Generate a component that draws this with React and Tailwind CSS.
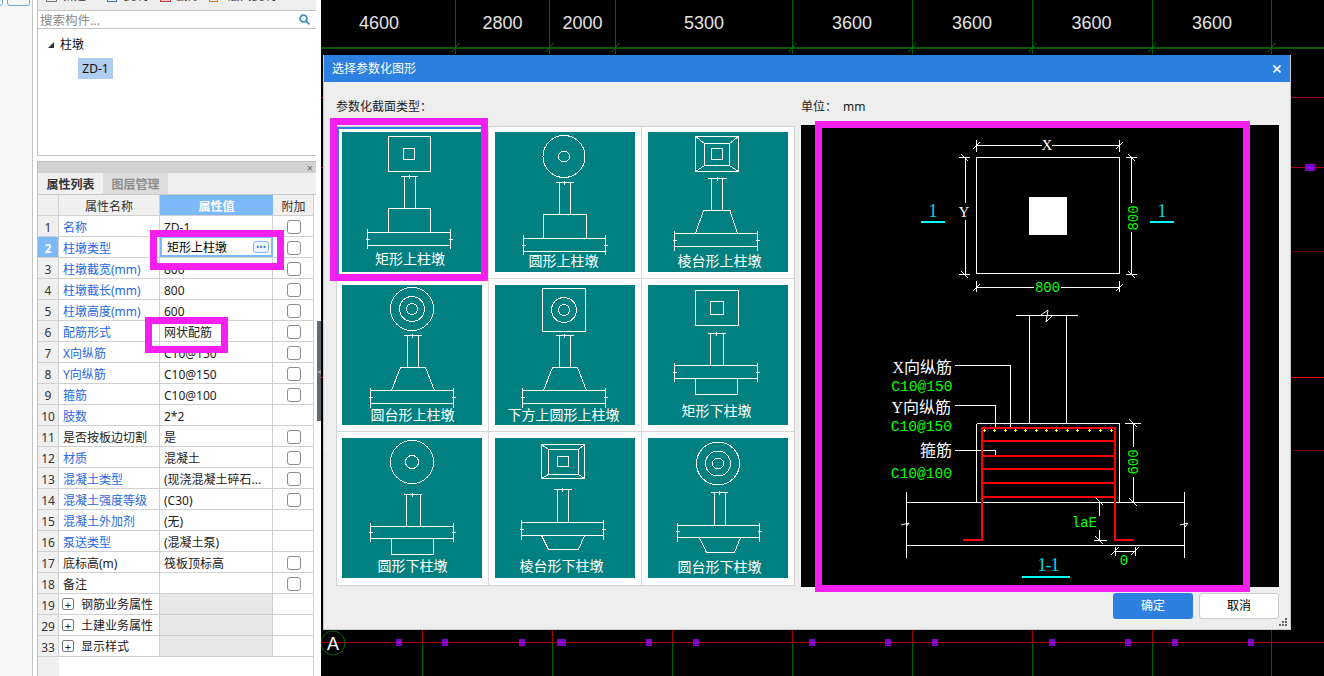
import React from 'react';

const rows = [
  { n: 1, name: '名称', value: 'ZD-1', check: true, blue: true },
  { n: 2, name: '柱墩类型', value: '矩形上柱墩', check: true, blue: true, active: true },
  { n: 3, name: '柱墩截宽(mm)', value: '800', check: true, blue: true },
  { n: 4, name: '柱墩截长(mm)', value: '800', check: true, blue: true },
  { n: 5, name: '柱墩高度(mm)', value: '600', check: true, blue: true },
  { n: 6, name: '配筋形式', value: '网状配筋', check: true, blue: true },
  { n: 7, name: 'X向纵筋', value: 'C10@150', check: true, blue: true },
  { n: 8, name: 'Y向纵筋', value: 'C10@150', check: true, blue: true },
  { n: 9, name: '箍筋', value: 'C10@100', check: true, blue: true },
  { n: 10, name: '肢数', value: '2*2', blue: true },
  { n: 11, name: '是否按板边切割', value: '是', check: true },
  { n: 12, name: '材质', value: '混凝土', check: true, blue: true },
  { n: 13, name: '混凝土类型', value: '(现浇混凝土碎石...', check: true, blue: true },
  { n: 14, name: '混凝土强度等级', value: '(C30)', check: true, blue: true },
  { n: 15, name: '混凝土外加剂', value: '(无)', blue: true },
  { n: 16, name: '泵送类型', value: '(混凝土泵)', blue: true },
  { n: 17, name: '底标高(m)', value: '筏板顶标高', check: true },
  { n: 18, name: '备注', value: '', check: true },
  { n: 19, name: '钢筋业务属性', group: true },
  { n: 29, name: '土建业务属性', group: true },
  { n: 33, name: '显示样式', group: true },
];

const gridX = [455.5, 549.5, 615.5, 792.5, 912.5, 1032.5, 1152.5, 1271.5];
const spans = [
  [379, '4600'], [502.5, '2800'], [582.5, '2000'], [704, '5300'],
  [852, '3600'], [972, '3600'], [1091.5, '3600'], [1212, '3600'],
];
const lowerX = [422.5, 552.5, 672.5, 792.5, 912.5, 1032.5, 1152.5, 1271.5];
const pins = [399, 445, 522, 560, 649, 696, 812, 888, 935, 1052, 1128, 1175, 1251];
const rails = [
  [97.5, '#a00010'], [167.5, '#b00010'], [251.5, '#500000'], [377.5, '#ff0000'], [450.5, '#600000'],
];

const thumbs = [
  { label: '矩形上柱墩', lx: 68, ly: 128,
    rects: [[46.5, 4.5, 42, 35], [61.5, 16.5, 11, 11]],
    cap: [58.5, 75.5, 44.5], col: [62.5, 73.5, 76.5],
    pier: [46.5, 76.5, 42, 24], slab: [25.5, 108.5, 100.5, 113.5, 97, 117] },
  { label: '圆形上柱墩', lx: 68.5, ly: 130,
    circles: [[69, 24.5, 21], [69, 24.5, 5.5]],
    cap: [60.5, 78.5, 50.5], col: [64.5, 75.5, 82.5],
    pier: [48.5, 82.5, 43, 24], slab: [28.5, 110.5, 106.5, 119.5, 103, 123] },
  { label: '棱台形上柱墩', lx: 71.5, ly: 130,
    rects: [[47.5, 4.5, 43, 35], [56.5, 11.5, 25, 22], [63.5, 16.5, 11, 11]],
    diag: [[47.5, 4.5, 56.5, 11.5], [90.5, 4.5, 81.5, 11.5], [47.5, 39.5, 56.5, 33.5], [90.5, 39.5, 81.5, 33.5]],
    cap: [59.5, 78.5, 46.5], col: [63.5, 74.5, 78.5],
    frustum: [55.5, 82, 78.5, 47.5, 89.5, 101.5], slab: [26.5, 109.5, 101.5, 114.5, 99, 119] },
  { label: '圆台形上柱墩', lx: 70.5, ly: 131,
    circles: [[70, 24, 21.5], [70, 24, 12.5], [70, 24, 5.5]],
    cap: [61.5, 79.5, 50.5], col: [65.5, 76.5, 82.5],
    frustum: [58.5, 83.5, 82.5, 49.5, 92.5, 105.5], slab: [28.5, 111.5, 105.5, 118.5, 103, 123] },
  { label: '下方上圆形上柱墩', lx: 68.5, ly: 131,
    rects: [[47.5, 3.5, 43, 43]],
    circles: [[69, 25, 12.5], [69, 25, 5.5]],
    cap: [60.5, 78.5, 50.5], col: [64.5, 75.5, 82.5],
    frustum: [57.5, 82.5, 82.5, 48.5, 91.5, 105.5], slab: [27.5, 110.5, 105.5, 118.5, 103, 123] },
  { label: '矩形下柱墩', lx: 68.5, ly: 127,
    rects: [[47.5, 5.5, 43, 35], [62.5, 16.5, 13, 13]],
    cap: [59.5, 77.5, 48.5], col: [62.5, 75.5, 80.5],
    slab: [26.5, 109.5, 80.5, 93.5, 78, 97], pier: [47.5, 93.5, 42, 16] },
  { label: '圆形下柱墩', lx: 70.5, ly: 129,
    circles: [[70, 24, 21.5], [70, 24, 6.5]],
    cap: [61.5, 79.5, 56.5], col: [64.5, 78.5, 88.5],
    slab: [28.5, 111.5, 88.5, 100.5, 85, 104], pier: [49.5, 100.5, 42, 16] },
  { label: '棱台形下柱墩', lx: 66.5, ly: 129,
    rects: [[46.5, 6.5, 43, 34], [53.5, 11.5, 30, 25], [62.5, 18.5, 11, 10]],
    diag: [[46.5, 6.5, 53.5, 11.5], [89.5, 6.5, 83.5, 11.5], [46.5, 40.5, 53.5, 36.5], [89.5, 40.5, 83.5, 36.5]],
    cap: [58.5, 76.5, 51.5], col: [62.5, 73.5, 84.5],
    slab: [26.5, 108.5, 84.5, 97.5, 82, 102], frustum: [46.5, 89.5, 97.5, 53.5, 83.5, 111.5] },
  { label: '圆台形下柱墩', lx: 71.5, ly: 130,
    circles: [[70, 25.5, 21.5], [70, 25.5, 12.5], [70, 25.5, 5.5]],
    cap: [62.5, 79.5, 54.5], col: [66.5, 77.5, 87.5],
    slab: [29.5, 111.5, 87.5, 99.5, 85, 104], frustum: [51.5, 92.5, 99.5, 58.5, 86.5, 114.5] },
];

const cjk = '"Noto Sans CJK SC", "Noto Sans", sans-serif';
const mono = '"Liberation Mono", "Noto Sans CJK SC", monospace';
const serif = '"Liberation Serif", "Noto Sans CJK SC", serif';

const Thumb = ({ t }) => {
  const [sl, sr, st, sb, et, eb] = t.slab;
  const [cl, cr, cy] = t.cap;
  const [c1, c2, cEnd] = t.col;
  const mid = (cl + cr) / 2;
  return (
    <svg width="140" height="140" className="block bg-[#008080]" fill="none" stroke="#fff" strokeWidth="1" shapeRendering="crispEdges">
      {(t.rects || []).map((r, i) => <rect key={i} x={r[0]} y={r[1]} width={r[2]} height={r[3]} />)}
      {(t.circles || []).map((c, i) => <circle key={i} cx={c[0]} cy={c[1]} r={c[2]} />)}
      {(t.diag || []).map((d, i) => <line key={i} x1={d[0]} y1={d[1]} x2={d[2]} y2={d[3]} />)}
      <path d={`M${cl} ${cy}H${cr}M${mid} ${cy - 2}V${cy + 2}M${c1} ${cy}V${cEnd}M${c2} ${cy}V${cEnd}`} />
      {t.pier && <rect x={t.pier[0]} y={t.pier[1]} width={t.pier[2]} height={t.pier[3]} />}
      {t.frustum && (
        <path d={`M${t.frustum[0]} ${t.frustum[2]}H${t.frustum[1]}L${t.frustum[4]} ${t.frustum[5]}${t.frustum[5] > sb ? `H${t.frustum[3]}Z` : `M${t.frustum[0]} ${t.frustum[2]}L${t.frustum[3]} ${t.frustum[5]}`}`} />
      )}
      <path d={`M${sl} ${st}H${sr}M${sl} ${sb}H${sr}M${sl} ${et}V${eb}M${sr} ${et}V${eb}M${sl - 2} ${(st + sb) / 2}h4M${sr - 2} ${(st + sb) / 2}h4`} />
      <text x={t.lx} y={t.ly} textAnchor="middle" dominantBaseline="middle" fill="#fff" stroke="none" fontSize="14" fontFamily={cjk}>{t.label}</text>
    </svg>
  );
};

const Canvas = () => (
  <svg width="1003" height="676" viewBox="321 0 1003 676" className="block" shapeRendering="crispEdges">
    <rect x="321" y="47" width="1003" height="2" fill="#0b560b" />
    {gridX.map((x) => (
      <g key={x} stroke="#006400">
        <line x1={x} y1="0" x2={x} y2="54" />
        <line x1={x - 4} y1="52" x2={x + 4} y2="43" stroke="#0a7a0a" shapeRendering="auto" />
      </g>
    ))}
    {spans.map(([x, v], i) => (
      <text key={i} x={x} y="29" textAnchor="middle" fill="#e4e4e4" fontSize="18" fontFamily='"Liberation Sans", sans-serif'>{v}</text>
    ))}
    {rails.map(([y, c]) => <line key={y} x1="321" y1={y} x2="1324" y2={y} stroke={c} />)}
    {lowerX.map((x) => (
      <g key={x}>
        <line x1={x} y1="628" x2={x} y2="642" stroke="#a00000" />
        <line x1={x} y1="642" x2={x} y2="676" stroke="#006400" />
      </g>
    ))}
    <line x1="321" y1="642.5" x2="1324" y2="642.5" stroke="#b00000" />
    {pins.map((x) => <rect key={x} x={x - 3} y="639" width={x === 560 ? 9 : 6} height="7" fill="#8000c8" />)}
    <rect x="1305" y="164" width="10" height="7" fill="#8000d0" />
    <circle cx="333" cy="643" r="12" fill="none" stroke="#006400" shapeRendering="auto" />
    <text x="333" y="650" textAnchor="middle" fill="#fff" fontSize="18" fontFamily='"Liberation Sans", sans-serif'>A</text>
  </svg>
);

const dots = [984, 994, 1005, 1015, 1025, 1036, 1046, 1056, 1067, 1077, 1089, 1100, 1111];
const bars = [441, 455.5, 469, 483, 497];

const Preview = () => (
  <svg width="478" height="462" viewBox="801 125 478 462" className="block bg-black" fill="none" stroke="#fff" strokeWidth="1" shapeRendering="crispEdges">
    {/* plan */}
    <rect x="976.5" y="157.5" width="143" height="116" />
    <rect x="1029" y="197" width="38" height="38" fill="#fff" stroke="none" />
    <path d="M976.5 145.5H1042M1052 145.5H1119.5M976.5 140V152M1119.5 140V152" />
    <path d="M965.5 157.5V203M965.5 220V274M959 157.5H970M959 274H970" />
    <path d="M1131.5 157.5V203M1131.5 232V274M1126 157.5H1137M1126 274H1137" />
    <path d="M976.5 287.5H1034M1061 287.5H1119.5M976.5 281V292M1119.5 281V292" />
    <g shapeRendering="auto">
      <path d="M973 149l7-7M1116 149l7-7M973 291l7-7M1116 291l7-7M961 154l7 7M961 271l7 7M1128 154l7 7M1128 271l7 7" />
    </g>
    <g stroke="none" fontFamily={mono}>
      <text x="1047" y="150" textAnchor="middle" fill="#fff" fontSize="15" fontFamily={serif}>X</text>
      <text x="964" y="217" textAnchor="middle" fill="#fff" fontSize="15" fontFamily={serif}>Y</text>
      <text x="1047.5" y="292" textAnchor="middle" fill="#00ff00" fontSize="14">800</text>
      <text transform="translate(1138 218) rotate(-90)" textAnchor="middle" fill="#00ff00" fontSize="14">800</text>
      <text x="933" y="217" textAnchor="middle" fill="#00d8e8" fontSize="18" fontFamily={serif}>1</text>
      <text x="1162" y="217" textAnchor="middle" fill="#00d8e8" fontSize="18" fontFamily={serif}>1</text>
    </g>
    <path d="M921 222H945M1150 222H1174" stroke="#00ffff" strokeWidth="2" />

    {/* section */}
    <path d="M1016 315.5H1078M1029.5 315.5V423M1066.5 315.5V423" />
    <path d="M1041 315l7-5-2 12 7-7" shapeRendering="auto" />
    <path d="M976.5 423.5H1119.5M976.5 423.5V502M1119.5 423.5V502" />
    <path d="M906.5 502.5H1184.5M906.5 545.5H1184.5M906.5 492V558M1184.5 492V558" />
    <path d="M901 525l8-2-3 4M1180 525l8-2-3 4" shapeRendering="auto" />
    <path d="M955 365.5H1010.5V428M955 405.5H995.5V429M955 450.5H995.5V456" />
    <path d="M963 539.5H982V427.5H1114.5V539.5H1134" stroke="#ff0000" strokeWidth="2" />
    {bars.map((y) => <line key={y} x1="982" y1={y} x2="1114.5" y2={y} stroke="#ff0000" strokeWidth="2" />)}
    {dots.map((x) => <path key={x} d={`M${x - 1.5} 430.5h3M${x} 429v3`} stroke="#ffff00" />)}
    <path d="M1125 423.5H1141M1133.5 423V447M1133.5 477V502M1094 540.5H1107M1099.5 501V516M1099.5 530V540M1115.5 551.5H1135M1115.5 547V556M1135.5 547V556" />
    <path d="M1129 419l8 8M1129 498l8 8M1095 497l8 8M1095 536l8 8M1111 555l8-8M1131 555l8-8" shapeRendering="auto" />
    <g stroke="none" fontFamily={serif} textAnchor="end">
      <text x="952" y="373" fill="#fff" fontSize="16">X向纵筋</text>
      <text x="951" y="413" fill="#fff" fontSize="16">Y向纵筋</text>
      <text x="952" y="456" fill="#fff" fontSize="16">箍筋</text>
    </g>
    <g stroke="none" fontFamily={mono} textAnchor="end">
      <text x="952.5" y="391" fill="#00ff00" fontSize="14.6">C10@150</text>
      <text x="952" y="431" fill="#00ff00" fontSize="14.6">C10@150</text>
      <text x="952" y="478" fill="#00ff00" fontSize="14.6">C10@100</text>
      <text x="1097" y="527" fill="#00ff00" fontSize="14">laE</text>
      <text transform="translate(1138 462) rotate(-90)" textAnchor="middle" fill="#00ff00" fontSize="14">600</text>
      <text x="1124" y="565" textAnchor="middle" fill="#00ff00" fontSize="14">0</text>
      <text x="1048" y="571" textAnchor="middle" fill="#00d8e8" fontSize="18" letterSpacing="-1" fontFamily={serif}>1-1</text>
    </g>
    <path d="M1022 576.5H1070" stroke="#00ffff" strokeWidth="2" />
  </svg>
);

const Box = () => <span className="block w-[14px] h-[14px] rounded-[3px] border border-[#8c8c8c] bg-white" />;

const cellLine = 'border-r border-[#d0d0d0]';

const PropRow = ({ row }) => (
  <div className="grid grid-cols-[21px_101px_113px_41px] grid-rows-[20px] h-[21px] border-b border-[#d0d0d0] bg-white text-[12px] leading-[24px]">
    <div className={`${cellLine} text-center ${row.active ? 'bg-[#7db8f8] text-white font-bold' : 'bg-[#f0f0f0] text-[#333]'}`}>{row.n}</div>
    {row.group ? (
      <div className={`${cellLine} flex items-center pl-[3px] gap-[7px] text-[#222]`}>
        <span className="flex items-center justify-center w-[12px] h-[12px] rounded-[2px] border border-[#777] text-[11px] leading-none">+</span>
        <span className="pt-[2px] leading-[20px]">{row.name}</span>
      </div>
    ) : (
      <div className={`${cellLine} pl-[4px] truncate ${row.blue ? 'text-[#2868e0]' : 'text-[#222]'}`}>{row.name}</div>
    )}
    {row.group ? (
      <div className={`${cellLine} bg-[#e8e8e8]`} />
    ) : row.active ? (
      <div className="flex items-center justify-between border-2 border-[#7db8f8] pl-[5px] pr-[2px] -mt-px text-black">
        <span className="pt-[2px]">{row.value}</span>
        <span className="flex items-center justify-center w-[16px] h-[12px] rounded-[3px] border border-[#7db8f8] bg-[#eef4fc] text-[#3b82d8] text-[9px] leading-none">•••</span>
      </div>
    ) : (
      <div className={`${cellLine} pl-[4px] text-[#222] whitespace-nowrap overflow-hidden`}>{row.value}</div>
    )}
    <div className="flex items-center justify-center pt-px">{row.check && <Box />}</div>
  </div>
);

const LeftPanel = () => (
  <div className="flex flex-col w-[280px] h-full border-x border-[#c0c0c0] bg-white -mr-px">
    <div className="h-[11px] overflow-hidden bg-[#eeeeee] border-b border-[#c4c4c4]">
      <div className="flex items-center h-[14px] -mt-[11px] text-[12px] text-[#333]">
        <span className="ml-[8px] w-[11px] h-[11px] border border-[#777]" />
        <span className="ml-[5px]">新建</span>
        <span className="ml-[21px] w-[10px] h-[11px] border border-[#3b6fb0]" />
        <span className="ml-[7px]">复制</span>
        <span className="ml-[12px] w-[11px] h-[11px] border border-[#c04040] bg-[#f0c0c0]" />
        <span className="ml-[5px]">删除</span>
        <span className="ml-[9px] w-[9px] h-[11px] border border-[#e07820]" />
        <span className="ml-[10px]">层间复制</span>
      </div>
    </div>
    <div className="flex items-center justify-between h-[18px] pl-[2px] pr-[6px] border-b border-[#c4c4c4] text-[12.5px] text-[#8a8a8a]">
      <span className="pt-[3px]">搜索构件...</span>
      <svg width="11" height="11" viewBox="0 0 11 11" fill="none" stroke="#3c8fc8" strokeWidth="1.8">
        <circle cx="4.5" cy="4.5" r="3.4" />
        <path d="M7 7l3.4 3.4" />
      </svg>
    </div>
    <div className="h-[127px] pl-[10px] pt-[6px] border-b border-[#c0c0c0] text-[12px] text-[#111]">
      <div className="flex items-center gap-[6px] h-[20px]">
        <span className="w-0 h-0 border-l-[6px] border-l-transparent border-b-[6px] border-b-[#333]" />
        <span>柱墩</span>
      </div>
      <div className="ml-[30px] mt-[3px] w-[35px] h-[21px] leading-[21px] text-center bg-[#b0cdf0]">ZD-1</div>
    </div>
    <div className="h-[5px] -mx-px bg-white border-x border-white" />
    <div className="flex items-center justify-end h-[12px] pr-[3px] bg-[#d2d2d2] border-t border-[#c0c0c0]">
      <span className="text-[11px] leading-none text-[#666]">×</span>
    </div>
    <div className="flex h-[22px] bg-[#f0f0f0] border-b border-[#c8c8c8] text-[12px] leading-[24px]">
      <div className="w-[65px] text-center font-bold text-[#333]">属性列表</div>
      <div className="w-[65px] text-center font-bold text-[#8c8c8c] bg-[#dcdcdc]">图层管理</div>
    </div>
    <div className="flex flex-1 min-h-0">
      <div className="flex flex-col w-[276px] border-r border-[#d0d0d0]">
        <div className="grid grid-cols-[21px_101px_113px_41px] grid-rows-[20px] h-[21px] border-b border-[#d0d0d0] bg-[#f0f0f0] text-[12px] leading-[24px] text-center text-[#333]">
          <div className={cellLine} />
          <div className={cellLine}>属性名称</div>
          <div className="bg-[#7db8f8] text-white font-bold">属性值</div>
          <div>附加</div>
        </div>
        {rows.map((row) => <PropRow key={row.n} row={row} />)}
        <div className="flex-1 flex">
          <div className="w-[21px] bg-[#f0f0f0]" />
        </div>
      </div>
    </div>
  </div>
);

const Dialog = () => (
  <div className="absolute left-[2px] top-[55px] flex flex-col w-[968px] h-[575px] bg-[#eeeeee] border-x border-b border-[#c8ccd0]">
    <div className="flex items-center justify-between shrink-0 h-[27px] pl-[8px] pr-[9px] bg-[#2e80e0] text-white text-[12px]">
      <span>选择参数化图形</span>
      <svg width="8" height="8" viewBox="0 0 8 8" stroke="#fff" strokeWidth="1.6">
        <path d="M0.5 0.5l7 7M7.5 0.5l-7 7" />
      </svg>
    </div>
    <div className="flex px-[12px] pt-[17px] h-[43px] text-[12px] leading-[16px] text-[#222]">
      <div className="w-[465px]">参数化截面类型：</div>
      <div className="flex gap-[6px]">
        <span>单位：</span>
        <span>mm</span>
      </div>
    </div>
    <div className="flex h-[462px]">
      <div className="w-[465px] ml-[12px] pt-px">
        <div className="grid grid-cols-[152px_153px_152px] grid-rows-[152px_153px_153px] w-[459px] border border-[#d0d0d0] bg-white">
          {thumbs.map((t, i) => (
            <div
              key={t.label}
              className={`${i % 3 === 2 ? '' : 'border-r border-r-[#d8d8d8]'} ${i < 6 ? 'border-b border-b-[#d8d8d8]' : ''} ${i % 3 === 0 ? 'pl-[5px]' : 'pl-[6px]'} ${i < 3 ? 'pt-[5px]' : 'pt-[6px]'}`}
            >
              <div className={`w-[140px] ${i === 0 ? 'outline-2 outline-offset-[3px] outline-[#2e80e0]' : ''}`}>
                <Thumb t={t} />
              </div>
            </div>
          ))}
        </div>
      </div>
      <Preview />
    </div>
    <div className="flex justify-end gap-[6px] pt-[6px] pr-[11px] text-[12px]">
      <button className="w-[80px] h-[26px] rounded-[3px] bg-[#2e80e0] text-white">确定</button>
      <button className="w-[80px] h-[26px] rounded-[3px] bg-white border border-[#cccccc] text-black">取消</button>
    </div>
    <svg className="absolute right-[2px] bottom-[2px]" width="9" height="9" viewBox="0 0 9 9" fill="#666">
      <rect x="6" y="0" width="2" height="2" />
      <rect x="3" y="3" width="2" height="2" />
      <rect x="6" y="3" width="2" height="2" />
      <rect x="0" y="6" width="2" height="2" />
      <rect x="3" y="6" width="2" height="2" />
      <rect x="6" y="6" width="2" height="2" />
    </svg>
  </div>
);

const App = () => (
  <div className="relative flex w-[1324px] h-[676px] overflow-hidden bg-white font-['Noto_Sans','Noto_Sans_CJK_SC',sans-serif]">
    <div className="flex gap-[3px] w-[33px] shrink-0 bg-[#f6f6f6] border-r border-[#c4c4c4]">
      <div className="-ml-[3px] -mt-[6px] w-[6px] h-[12px] rounded-[3px] border border-[#6ea8d8]" />
      <div className="ml-px -mt-[6px] w-[23px] h-[12px] rounded-[3px] border border-[#6ea8d8]" />
    </div>
    <div className="w-[4px] shrink-0 bg-white" />
    <LeftPanel />
    <div className="w-[5px] shrink-0 bg-white">
      <div className="flex items-center justify-center mt-[321px] ml-px h-[100px] bg-[#5f6b75] text-[8px] text-[#aab]">◂</div>
    </div>
    <div className="relative flex-1 bg-black">
      <Canvas />
      <Dialog />
    </div>

    {/* hand-drawn highlights over the screenshot */}
    <div className="absolute left-[150px] top-[230px] w-[134px] h-[40px] border-[7px] border-[#f520f0]" />
    <div className="absolute left-[145px] top-[317px] w-[83px] h-[36px] border-[7px] border-[#f520f0]" />
    <div className="absolute left-[330px] top-[118px] w-[158px] h-[163px] border-[7px] border-[#f520f0]" />
    <div className="absolute left-[815px] top-[121px] w-[435px] h-[471px] border-[7px] border-[#f520f0]" />
  </div>
);

export default App;
